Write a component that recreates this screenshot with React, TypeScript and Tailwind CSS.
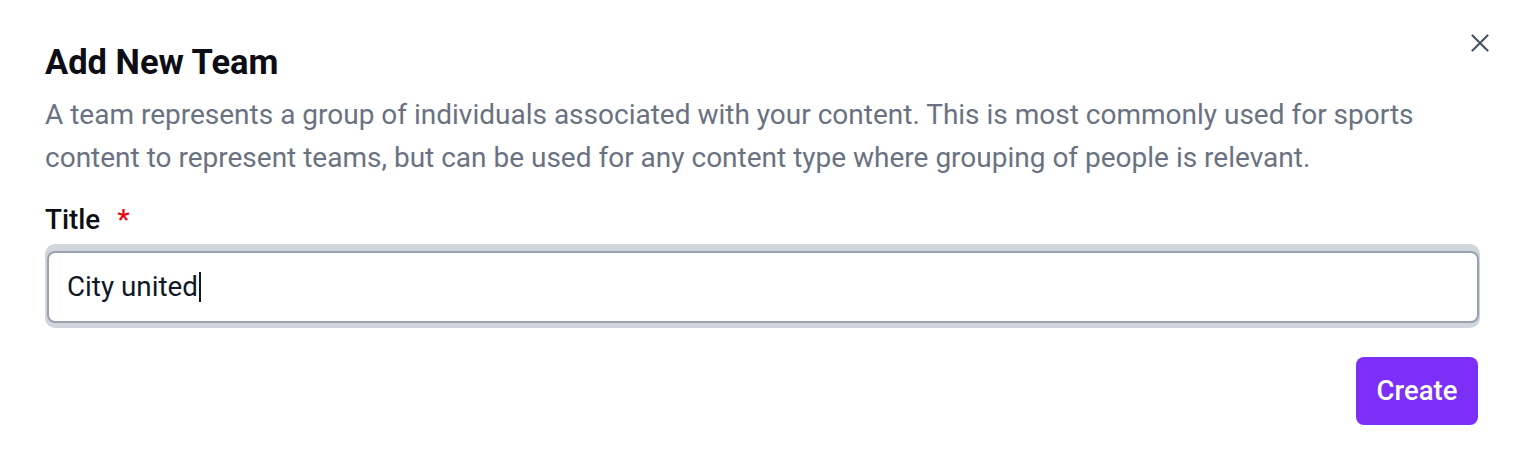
import React from "react";

export default function App() {
  return (
    <div className="w-[1526px] h-[474px] bg-white relative" style={{ fontFamily: "Roboto, 'Open Sans', sans-serif" }}>
      <button className="absolute right-[37px] top-[34px] w-[18px] h-[18px] text-gray-600">
        <svg viewBox="0 0 18 18" width="18" height="18" fill="none" stroke="currentColor" strokeWidth="2.2" strokeLinecap="round">
          <path d="M1.5 1.5 L16.5 16.5 M16.5 1.5 L1.5 16.5" />
        </svg>
      </button>
      <div className="pl-[45px] pr-[46px] pt-[43px] flex flex-col">
        <h2 className="text-[34.5px] leading-[38px] font-bold text-[#0d0d16]">Add New Team</h2>
        <p className="mt-[12px] text-[28px] leading-[43px] text-gray-500 w-[1420px]">
          A team represents a group of individuals associated with your content. This is most commonly used for sports content to represent teams, but can be used for any content type where grouping of people is relevant.
        </p>
        <label className="mt-[25px] text-[27.8px] leading-[32px] font-medium text-[#0d0d16] flex items-start">
          Title<span className="ml-[17px] text-red-600">*</span>
        </label>
        <div className="mt-[8px] bg-gray-300 rounded-[10px] pt-[7px] pb-[5px] pl-[2px] pr-[1px]">
          <div className="h-[72px] bg-white border-2 border-gray-400 rounded-[8px] flex items-center pl-[18px] text-[27.8px] text-gray-900">
            City united<span className="inline-block w-[2px] h-[30px] bg-gray-900 ml-[1px]" />
          </div>
        </div>
        <div className="mt-[29px] flex justify-end pr-[2px]">
          <button className="w-[122px] h-[68px] rounded-[8px] bg-[#7b2ff7] text-white text-[27.5px] font-medium">Create</button>
        </div>
      </div>
    </div>
  );
}
